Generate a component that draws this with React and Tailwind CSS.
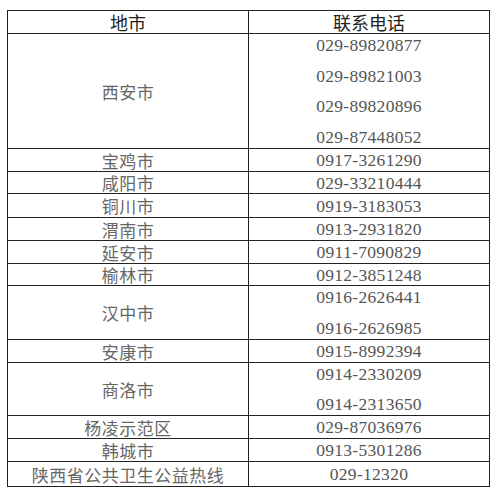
const cn = "font-['Noto_Sans_CJK_SC',sans-serif]";
const num = "font-['Liberation_Serif','Noto_Sans_CJK_SC',serif]";

const rows = [
  { city: '西安市', phones: ['029-89820877', '029-89821003', '029-89820896', '029-87448052'], h: 'h-[115px]' },
  { city: '宝鸡市', phones: ['0917-3261290'], h: 'h-[23px]' },
  { city: '咸阳市', phones: ['029-33210444'], h: 'h-[22px]' },
  { city: '铜川市', phones: ['0919-3183053'], h: 'h-[24px]' },
  { city: '渭南市', phones: ['0913-2931820'], h: 'h-[23px]' },
  { city: '延安市', phones: ['0911-7090829'], h: 'h-[23px]' },
  { city: '榆林市', phones: ['0912-3851248'], h: 'h-[22px]' },
  { city: '汉中市', phones: ['0916-2626441', '0916-2626985'], h: 'h-[54px]' },
  { city: '安康市', phones: ['0915-8992394'], h: 'h-[23px]' },
  { city: '商洛市', phones: ['0914-2330209', '0914-2313650'], h: 'h-[53px]' },
  { city: '杨凌示范区', phones: ['029-87036976'], h: 'h-[23px]' },
  { city: '韩城市', phones: ['0913-5301286'], h: 'h-[23px]' },
  { city: '陕西省公共卫生公益热线', phones: ['029-12320'], h: 'h-[24px]' },
];

function Row({ city, phones, h, last }) {
  const multi = phones.length > 1;
  return (
    <div className={`flex ${h} ${last ? '' : 'border-b border-[#222]'}`}>
      <div className={`w-[241px] border-r border-[#222] flex items-center justify-center text-[17px] tracking-[0.5px] text-[#666] leading-none ${cn}`}>
        {city}
      </div>
      <div
        className={`w-[240px] flex flex-col items-center text-[17.5px] tracking-[0.3px] text-[#555] leading-[22px] ${num} ${
          multi ? 'justify-between' : 'justify-center'
        }`}
      >
        {phones.map((p) => (
          <span key={p}>{p}</span>
        ))}
      </div>
    </div>
  );
}

export default function App() {
  return (
    <div className="w-[500px] h-[501px] bg-white pl-[7px] pt-[10px]">
      <div className="w-[483px] border border-[#222]">
        <div className={`flex h-[23px] border-b border-[#222] text-[18px] text-[#222] leading-none ${cn}`}>
          <div className="w-[241px] border-r border-[#222] flex items-center justify-center">地市</div>
          <div className="w-[240px] flex items-center justify-center">联系电话</div>
        </div>
        {rows.map((r, i) => (
          <Row key={r.city} {...r} last={i === rows.length - 1} />
        ))}
      </div>
    </div>
  );
}
